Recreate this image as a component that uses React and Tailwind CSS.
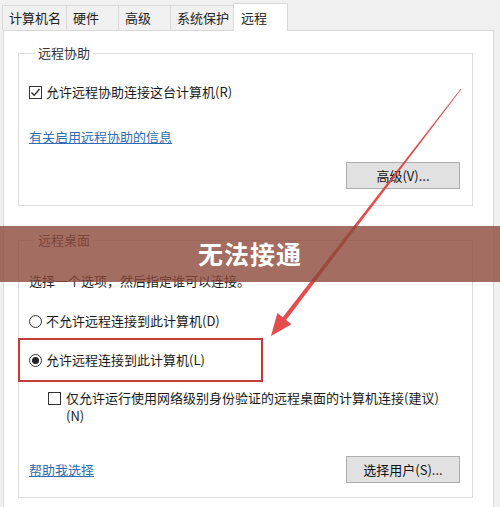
import React from "react";

const font = { fontFamily: '"Noto Sans CJK SC", "Noto Sans", sans-serif' };

function CheckBox({ checked }) {
  return (
    <span className="w-[13px] h-[13px] border border-[#333] bg-white flex items-center justify-center shrink-0">
      {checked && (
        <svg width="11" height="11" viewBox="0 0 11 11">
          <path d="M1.5 5.5 L4.2 8.3 L9.5 2" fill="none" stroke="#222" strokeWidth="1.3" />
        </svg>
      )}
    </span>
  );
}

function Radio({ checked }) {
  return (
    <span className="w-[13px] h-[13px] rounded-full border border-[#333] bg-white flex items-center justify-center shrink-0">
      {checked && <span className="w-[7px] h-[7px] rounded-full bg-[#222]" />}
    </span>
  );
}

function Btn({ children }) {
  return (
    <div className="w-[114px] h-[27px] bg-[#e1e1e1] border border-[#adadad] flex items-center justify-center text-[13px] text-[#111]">
      {children}
    </div>
  );
}

export default function App() {
  const tabs = [
    { t: "计算机名", w: "w-[64px]" },
    { t: "硬件", w: "w-[52px]" },
    { t: "高级", w: "w-[52px]" },
    { t: "系统保护", w: "w-[63px]" },
  ];
  return (
    <div className="relative w-[500px] h-[507px] bg-[#f0f0f0] overflow-hidden text-[#1a1a1a]" style={font}>
      {/* tabs */}
      <div className="flex items-end h-[30px] pl-[2px]">
        {tabs.map((x) => (
          <div
            key={x.t}
            className={`${x.w} h-[25px] border border-b-0 border-r-0 border-[#d9d9d9] bg-[#f0f0f0] pl-[6px] flex items-center text-[13px] text-[#222]`}
          >
            {x.t}
          </div>
        ))}
        <div className="w-[55px] h-[28px] border border-b-0 border-[#d9d9d9] bg-white pl-[7px] flex items-center text-[13px] text-[#222] -mb-px relative z-10">
          远程
        </div>
      </div>
      {/* panel */}
      <div className="ml-[3px] w-[491px] h-[480px] border border-[#d9d9d9] bg-white pl-[14px] pr-[20px] pt-[13px]">
        <fieldset className="border border-[#dcdcdc] pl-[10px] pr-[12px] pb-[16px]">
          <legend className="ml-[6px] px-[3px] text-[13px] leading-[18px] text-[#333]">远程协助</legend>
          <div className="mt-[21px] h-[18px] flex items-center gap-[4px] text-[13px]">
            <CheckBox checked />
            <span>允许远程协助连接这台计算机(R)</span>
          </div>
          <div className="mt-[27px] h-[18px] flex items-center text-[13px] text-[#2e6db4] underline">
            有关启用远程协助的信息
          </div>
          <div className="mt-[16px] flex justify-end">
            <Btn>高级(V)...</Btn>
          </div>
        </fieldset>

        <fieldset className="mt-[25px] border border-[#dcdcdc] pl-[10px] pr-[12px] pb-[14px]">
          <legend className="ml-[6px] px-[3px] text-[13px] leading-[18px] text-[#333]">远程桌面</legend>
          <div className="mt-[23px] h-[18px] flex items-center text-[13px]">选择一个选项，然后指定谁可以连接。</div>
          <div className="mt-[22px] h-[18px] flex items-center gap-[4px] text-[13px]">
            <Radio />
            <span>不允许远程连接到此计算机(D)</span>
          </div>
          <div className="mt-[8px] -ml-[11px] w-[245px] h-[44px] border-2 border-[#c63b3b] pl-[9px] flex items-center gap-[4px] text-[13px]">
            <Radio checked />
            <span>允许远程连接到此计算机(L)</span>
          </div>
          <div className="mt-[7px] ml-[19px] flex gap-[5px] text-[13px] leading-[18px]">
            <span className="mt-[3px]">
              <CheckBox />
            </span>
            <div className="flex flex-col">
              <span>仅允许运行使用网络级别身份验证的远程桌面的计算机连接(建议)</span>
              <span>(N)</span>
            </div>
          </div>
          <div className="mt-[31px] flex items-center justify-between">
            <span className="text-[13px] text-[#2e6db4] underline">帮助我选择</span>
            <Btn>选择用户(S)...</Btn>
          </div>
        </fieldset>
      </div>

      {/* arrow overlay */}
      <svg className="absolute inset-0 pointer-events-none" width="500" height="507" viewBox="0 0 500 507">
        <polygon
          points="460.7,88.8 461.3,89.2 286.1,319.9 291.5,324.2 271,336 277.3,313.1 282.7,317.3"
          fill="#e23a3a"
          fillOpacity="0.9"
        />
      </svg>

      {/* banner overlay */}
      <div className="absolute left-0 top-[226px] w-[500px] h-[56px] bg-[rgba(140,72,59,0.8)] flex items-center justify-center">
        <span className="text-white text-[25px] font-bold tracking-[1px]">无法接通</span>
      </div>
    </div>
  );
}
